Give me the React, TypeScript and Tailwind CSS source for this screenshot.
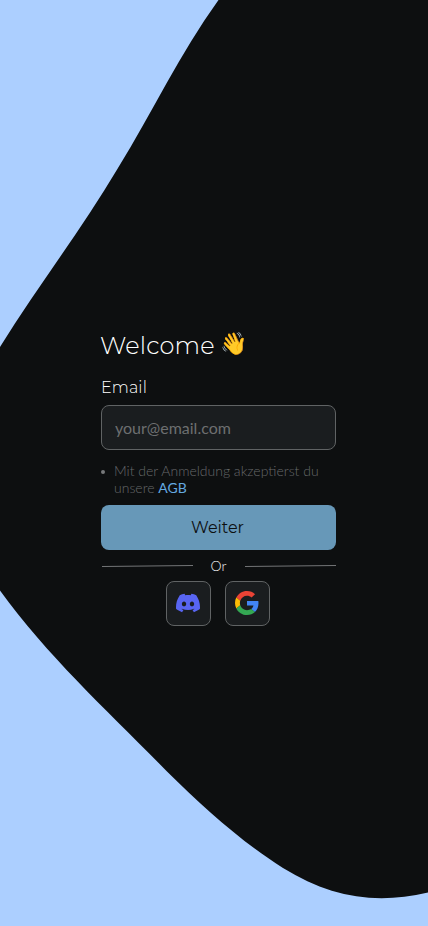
import { SiDiscord } from "react-icons/si";

const heading = "font-['Montserrat',sans-serif]";
const tile = "flex h-[45px] w-[45px] items-center justify-center rounded-lg border border-[#606364] bg-[#1a1d1f] pr-0.5 pb-0.5";

function Backdrop() {
  return (
    <svg className="absolute inset-0 -z-10 h-full w-full" viewBox="0 0 428 926" fill="#0d0f10" aria-hidden="true">
      <path d="M218.5 0C180 53 152 113 118 168C80 232 37 287 0 347V590.5C49 658 110 713 167 771.500C204 808 243 843 283 868C330 897 375 905 428 892.500V0Z" />
    </svg>
  );
}

function GoogleLogo() {
  return (
    <svg className="h-6 w-6" viewBox="0 0 48 48" aria-hidden="true">
      <path fill="#ea4335" d="M24 9.500c3.540 0 6.710 1.220 9.210 3.600l6.850-6.850C35.900 2.380 30.470 0 24 0 14.620 0 6.510 5.380 2.560 13.220l7.980 6.190C12.430 13.720 17.740 9.500 24 9.500z" />
      <path fill="#4285f4" d="M46.980 24.550c0-1.570-.15-3.090-.38-4.550H24v9.020h12.940c-.58 2.960-2.260 5.480-4.780 7.180l7.730 6c4.510-4.180 7.090-10.360 7.090-17.650z" />
      <path fill="#fbbc05" d="M10.530 28.590c-.48-1.450-.76-2.990-.76-4.590s.27-3.140.76-4.590l-7.980-6.190C.92 16.460 0 20.120 0 24c0 3.880.92 7.540 2.560 10.780l7.970-6.190z" />
      <path fill="#34a853" d="M24 48c6.480 0 11.930-2.130 15.890-5.810l-7.730-6c-2.150 1.450-4.920 2.300-8.160 2.300-6.260 0-11.570-4.220-13.470-9.910l-7.980 6.190C6.510 42.620 14.620 48 24 48z" />
    </svg>
  );
}

export default function App() {
  return (
    <main className="relative isolate flex h-[926px] w-[428px] flex-col overflow-hidden bg-[#accfff] pl-[101px] pt-[328px] font-['Lato',sans-serif]">
      <Backdrop />
      <form className="flex w-[235px] flex-col" onSubmit={(e) => e.preventDefault()}>
        <h1 className={`${heading} -ml-px flex h-[36px] items-center whitespace-nowrap text-2xl font-light tracking-[0.2px] text-white`}>
          <span className="w-[120px]">Welcome</span>
          <span className="-mt-1 text-[22px] tracking-normal">👋</span>
        </h1>
        <label htmlFor="email" className={`${heading} mt-[13px] h-[22px] text-base font-light leading-[22px] tracking-[0.1px] text-white`}>
          Email
        </label>
        <input
          id="email"
          type="email"
          placeholder="your@email.com"
          className="mt-[6px] h-[45px] w-full rounded-lg border border-[#606364] bg-[#1a1d1f] px-[13px] text-base text-white outline-none placeholder:text-[#6d6f70]"
        />
        <div className="mt-[12px] flex h-[34px] text-sm font-light leading-[17px] text-[#66686a]">
          <span className="mr-[9px] mt-2 h-1 w-1 shrink-0 rounded-full bg-[#77797b]" />
          <p className="whitespace-nowrap">
            Mit der Anmeldung akzeptierst du
            <br />
            unsere <a className="font-normal text-[#64a9e0]">AGB</a>
          </p>
        </div>
        <button className={`${heading} mt-[9px] h-[45px] rounded-lg bg-[#6798b8] pr-0.5 text-base text-[#0d0f10]`}>
          Weiter
        </button>
        <div className="flex h-[31px] items-center justify-between">
          <svg className="h-3 w-[92px]" viewBox="0 0 92 12" stroke="#737577"><path d="M1 6.500L92 5.500" /></svg>
          <span className="text-sm font-light text-[#f3f4f4]">Or</span>
          <svg className="h-3 w-[92px]" viewBox="0 0 92 12" stroke="#737577"><path d="M1 6.500L92 5.500" /></svg>
        </div>
        <div className="flex gap-[14px] pl-[65px]">
          <button aria-label="Discord" className={tile}>
            <SiDiscord className="h-6 w-6 text-[#5865f2]" />
          </button>
          <button aria-label="Google" className={tile}>
            <GoogleLogo />
          </button>
        </div>
      </form>
    </main>
  );
}
